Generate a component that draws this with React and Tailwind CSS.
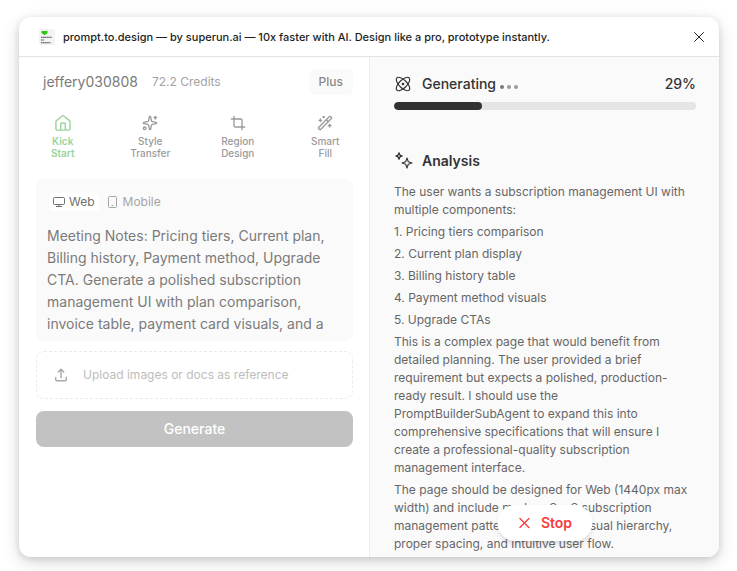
import React from 'react';
import { Crop, Sparkles, WandSparkles, X } from 'lucide-react';

function HomeIcon({ className }) {
  return (
    <svg viewBox="0 0 16 16" fill="none" stroke="currentColor" strokeWidth="1.4" strokeLinejoin="round" className={className} aria-hidden="true">
      <path d="M.9 6.800c0-.5.2-.9.6-1.200L7.200 1a1.300 1.300 0 0 1 1.600 0l5.700 4.600c.4.3.6.7.6 1.200v6.900c0 .8-.6 1.400-1.400 1.400H2.300c-.8 0-1.400-.6-1.400-1.400z" />
      <path d="M5.700 15V9.300c0-.8.6-1.300 1.300-1.300h2c.7 0 1.300.5 1.300 1.300V15" />
    </svg>
  );
}

function LogoIcon() {
  return (
    <svg viewBox="0 0 16 16" className="size-4 shrink-0" aria-hidden="true">
      <rect width="16" height="16" rx="2" fill="#f3f3f3" />
      <path d="M2.500 2h6v2L5.500 6.200 2.500 4z" fill="#25c80b" />
      <path d="M2 8.300h10.500M2 11h2.800M2 13.700h9.500" stroke="#4a4a4a" strokeWidth="1.100" strokeDasharray="1.500 .3" />
    </svg>
  );
}

function AtomIcon({ className }) {
  return (
    <svg viewBox="0 0 24 24" fill="none" stroke="currentColor" strokeWidth="1.600" className={className} aria-hidden="true">
      <circle cx="12" cy="12" r="1" fill="currentColor" />
      <path d="M20.200 20.200c2.040-2.030.02-7.360-4.500-11.900-4.540-4.520-9.870-6.540-11.900-4.500-2.040 2.030-.02 7.360 4.500 11.900 4.540 4.520 9.870 6.540 11.900 4.500Z" />
      <path d="M15.700 15.700c4.520-4.540 6.540-9.870 4.500-11.900-2.030-2.040-7.360-.02-11.900 4.500-4.520 4.540-6.540 9.870-4.500 11.900 2.030 2.040 7.360.02 11.900-4.500Z" />
    </svg>
  );
}

function TwinStarIcon({ className }) {
  return (
    <svg viewBox="0 0 20 20" fill="none" stroke="currentColor" strokeLinejoin="round" className={className} aria-hidden="true">
      <path d="M5 1.800 5.900 4.100 8.200 5 5.900 5.900 5 8.200 4.100 5.900 1.800 5 4.100 4.100z" strokeWidth="1.300" />
      <path d="M13 7 14.300 10.700 18 12 14.300 13.300 13 17 11.700 13.300 8 12 11.700 10.700z" strokeWidth="1.100" />
    </svg>
  );
}

function MonitorIcon({ className }) {
  return (
    <svg viewBox="0 0 12 12" fill="none" stroke="currentColor" className={className} aria-hidden="true">
      <rect x=".5" y="1.500" width="11" height="7" rx="1" />
      <path d="M6 8.500v2M3 10.500h6" />
    </svg>
  );
}

function PhoneIcon({ className }) {
  return (
    <svg viewBox="0 0 12 12" fill="none" stroke="currentColor" className={className} aria-hidden="true">
      <rect x="1.500" y=".5" width="8" height="11" rx="1" />
      <path d="M4.500 9.500h2" />
    </svg>
  );
}

function UploadIcon({ className }) {
  return (
    <svg viewBox="0 0 14 14" fill="none" stroke="currentColor" strokeWidth="1.400" strokeLinecap="round" strokeLinejoin="round" className={className} aria-hidden="true">
      <path d="M7 9.500v-8M4.300 4 7 1.300 9.700 4M1.700 9.500v2a1.200 1.200 0 0 0 1.200 1.200h8.200a1.200 1.200 0 0 0 1.200-1.200v-2" />
    </svg>
  );
}

const tabs = [
  { top: 'Kick', bottom: 'Start', Icon: HomeIcon, active: true },
  { top: 'Style', bottom: 'Transfer', Icon: Sparkles },
  { top: 'Region', bottom: 'Design', Icon: Crop },
  { top: 'Smart', bottom: 'Fill', Icon: WandSparkles },
];

const components = [
  'Pricing tiers comparison',
  'Current plan display',
  'Billing history table',
  'Payment method visuals',
  'Upgrade CTAs',
];

const promptText =
  'Meeting Notes: Pricing tiers, Current plan, Billing history, Payment method, Upgrade CTA. Generate a polished subscription management UI with plan comparison, invoice table, payment card visuals, and a';

function TitleBar() {
  return (
    <header className="flex h-10 shrink-0 items-center gap-2 border-b border-[#e3e3e3] pr-[11px] pl-5">
      <LogoIcon />
      <h1 className="flex-1 text-[11px] leading-4 font-medium text-[#1e1e1e]">
        prompt.to.design — by superun.ai — 10x faster with AI. Design like a pro, prototype instantly.
      </h1>
      <button aria-label="Close" className="text-[#1e1e1e]">
        <X className="size-[18px]" strokeWidth={1.3} />
      </button>
    </header>
  );
}

function PromptPanel() {
  return (
    <section className="flex w-1/2 flex-col pr-4 pl-[17px]">
      <div className="mt-3 flex items-center gap-3.5 pl-[7px]">
        <span className="text-sm text-[#7a7a7a]">jeffery030808</span>
        <span className="flex-1 text-xs text-[#a3a3a3]">72.2 Credits</span>
        <button className="rounded-md bg-[#fafafa] px-2.5 py-1 text-xs leading-[18px] font-medium text-[#8a8a8a]">Plus</button>
      </div>

      <nav className="-mr-4 -ml-[17px] mt-5 grid grid-cols-4">
        {tabs.map(({ top, bottom, Icon, active }) => (
          <button
            key={top}
            className={`flex flex-col items-center gap-1 text-[10px] leading-3 ${
              active ? 'font-semibold text-[#9ad39a]' : 'font-medium text-[#9a9a9e]'
            }`}
          >
            <Icon className="size-4" />
            <span>
              {top}
              <br />
              {bottom}
            </span>
          </button>
        ))}
      </nav>

      <div className="mt-5 flex flex-col rounded-lg bg-[#fafafa] px-[11px] pt-3.5">
        <div className="flex gap-1 pl-0.5">
          <button className="flex items-center gap-1 rounded bg-white px-1 text-xs leading-[18px] text-[#707070]">
            <MonitorIcon className="size-3" />
            Web
          </button>
          <button className="flex items-center gap-1 rounded px-1 text-xs leading-[18px] text-[#a6a6a6]">
            <PhoneIcon className="size-3" />
            Mobile
          </button>
        </div>
        <textarea
          aria-label="Prompt"
          className="mt-3.5 h-[116px] resize-none overflow-hidden text-sm leading-[22px] text-[#7a7a7a] outline-none"
          defaultValue={promptText}
        />
      </div>

      <button className="mt-2.5 flex h-12 items-center gap-[15px] rounded-lg border border-dashed border-[#ebebeb] px-[17px] text-xs text-[#bdbdbd]">
        <UploadIcon className="size-3.5 text-[#a8a8a8]" />
        Upload images or docs as reference
      </button>
      <button className="mt-3 h-9 rounded-lg bg-[#c2c2c2] text-sm font-medium text-white">Generate</button>
    </section>
  );
}

function ProgressPanel() {
  return (
    <section className="relative w-1/2 overflow-hidden border-l border-[#ededed] bg-[#fafafa] pt-[17px] pr-[23px] pl-6">
      <div className="flex items-center">
        <AtomIcon className="mr-2.5 size-[18px] text-[#333]" />
        <h2 className="text-sm font-medium text-[#333]">Generating</h2>
        <span className="mt-1.5 ml-1 flex gap-[3px]">
          <i className="size-1 rounded-full bg-[#777]" />
          <i className="size-1 rounded-full bg-[#999]" />
          <i className="size-1 rounded-full bg-[#999]" />
        </span>
        <span className="ml-auto text-sm font-medium text-[#333]">29%</span>
      </div>
      <div
        role="progressbar"
        aria-label="Generating"
        aria-valuenow={29}
        aria-valuemin={0}
        aria-valuemax={100}
        className="mt-2 h-2 overflow-hidden rounded-full bg-[#e5e5e5]"
      >
        <div className="h-full w-[29%] rounded-full bg-[#333]" />
      </div>

      <div className="mt-[41px] flex items-center gap-2">
        <TwinStarIcon className="size-5 text-[#333]" />
        <h2 className="text-sm font-semibold text-[#333]">Analysis</h2>
      </div>
      <div className="mt-3 space-y-1 text-xs leading-[18px] text-[#666]">
        <p>The user wants a subscription management UI with multiple components:</p>
        <ol className="space-y-1">
          {components.map((name, i) => (
            <li key={name}>
              {i + 1}. {name}
            </li>
          ))}
        </ol>
        <p>
          This is a complex page that would benefit from detailed planning. The user provided a brief requirement but
          expects a polished, production-ready result. I should use the PromptBuilderSubAgent to expand this into
          comprehensive specifications that will ensure I create a professional-quality subscription management
          interface.
        </p>
        <p>
          The page should be designed for Web (1440px max width) and include modern SaaS subscription management
          patterns with clear visual hierarchy, proper spacing, and intuitive user flow.
        </p>
      </div>

      <button className="absolute bottom-4 left-1/2 flex h-9 -translate-x-1/2 items-center gap-2 rounded-full bg-white px-5 text-sm font-semibold text-[#f83b3b] shadow-md">
        <X className="-ml-0.5 size-[18px]" strokeWidth={1.7} />
        Stop
      </button>
    </section>
  );
}

export default function App() {
  return (
    <main className="min-h-screen bg-white pt-[17px] pr-[18px] pb-3.5 pl-[19px] font-['Inter',sans-serif]">
      <div className="flex h-[540px] flex-col overflow-hidden rounded-xl bg-white shadow-[0_5px_17px_rgba(0,0,0,0.15),0_2px_7px_rgba(0,0,0,0.12)]">
        <TitleBar />
        <div className="flex min-h-0 flex-1">
          <PromptPanel />
          <ProgressPanel />
        </div>
      </div>
    </main>
  );
}
